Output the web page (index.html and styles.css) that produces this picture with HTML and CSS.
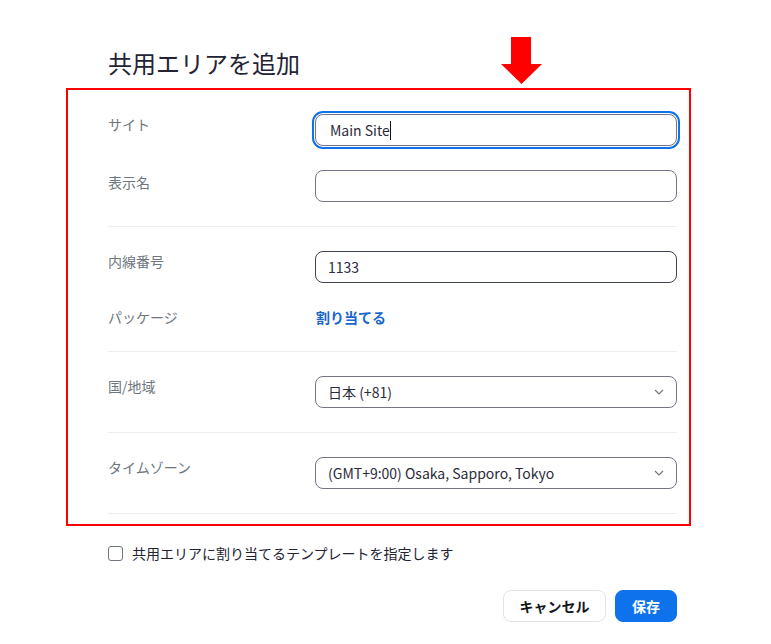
FILE: index.html
```html
<!DOCTYPE html>
<html lang="ja">
<head>
<meta charset="utf-8">
<title>共用エリアを追加</title>
<link rel="stylesheet" href="styles.css">
</head>
<body>
<div class="page">
  <h1 class="title">共用エリアを追加</h1>
  <svg class="arrow" width="42" height="48" viewBox="0 0 42 48" aria-hidden="true">
    <polygon points="10,0 30,0 30,27 41,27 20.5,47 0,27 10,27" fill="#ff0000"/>
  </svg>
  <div class="form-box">
    <div class="row">
      <div class="label">サイト</div>
      <div class="field field-focus"><span class="value">Main Site</span><span class="caret"></span></div>
    </div>
    <div class="row">
      <div class="label label-low">表示名</div>
      <div class="field"></div>
    </div>
    <div class="divider"></div>
    <div class="row">
      <div class="label">内線番号</div>
      <div class="field field-dark"><span class="value">1133</span></div>
    </div>
    <div class="row row-text">
      <div class="label">パッケージ</div>
      <a class="link" href="#">割り当てる</a>
    </div>
    <div class="divider"></div>
    <div class="row">
      <div class="label">国/地域</div>
      <div class="field select"><span class="value">日本 (+81)</span>
        <svg class="chevron" width="10" height="6" viewBox="0 0 10 6"><polyline points="1,1 5,5 9,1" fill="none" stroke="#6e7680" stroke-width="1.2"/></svg>
      </div>
    </div>
    <div class="divider"></div>
    <div class="row">
      <div class="label">タイムゾーン</div>
      <div class="field select"><span class="value">(GMT+9:00) Osaka, Sapporo, Tokyo</span>
        <svg class="chevron" width="10" height="6" viewBox="0 0 10 6"><polyline points="1,1 5,5 9,1" fill="none" stroke="#6e7680" stroke-width="1.2"/></svg>
      </div>
    </div>
    <div class="divider"></div>
  </div>
  <label class="check-row">
    <span class="checkbox"></span>
    <span class="check-text">共用エリアに割り当てるテンプレートを指定します</span>
  </label>
  <div class="actions">
    <button class="btn btn-cancel" type="button">キャンセル</button>
    <button class="btn btn-save" type="button">保存</button>
  </div>
</div>
</body>
</html>
```

FILE: styles.css
```css
* { box-sizing: border-box; }

html, body {
  margin: 0;
  padding: 0;
  background: #ffffff;
}

body {
  font-family: "Noto Sans CJK JP", "Noto Sans", sans-serif;
  color: #232333;
}

.page {
  position: relative;
  width: 625px;
  margin-left: 66px;
  padding-top: 47px;
}

.title {
  margin: 0 0 9px 42px;
  font-size: 24px;
  line-height: 32px;
  font-weight: 400;
  color: #232333;
}

.arrow {
  position: absolute;
  left: 435px;
  top: 37px;
}

.form-box {
  border: 2px solid #ff0000;
  padding: 0 12px 10px 40px;
  display: flex;
  flex-direction: column;
}

.row {
  display: flex;
  align-items: flex-start;
  margin-top: 24px;
}

.row-text {
  align-items: center;
  height: 20px;
}

.label {
  flex: 0 0 207px;
  font-size: 14px;
  line-height: 20px;
  color: #6e7680;
}

.label-low {
  margin-top: 2px;
}

.field {
  position: relative;
  flex: 1;
  height: 32px;
  border: 1px solid #747487;
  border-radius: 8px;
  display: flex;
  align-items: center;
  padding: 0 12px;
  font-size: 14px;
  color: #2b2b3a;
}

.field-focus {
  outline: 2px solid #0e72ed;
  outline-offset: 1px;
  padding-left: 14px;
}

.field-dark {
  border-color: #3d4350;
}

.caret {
  display: inline-block;
  width: 1px;
  height: 19px;
  background: #131619;
}

.select {
  justify-content: space-between;
}

.chevron {
  flex: 0 0 auto;
}

.link {
  font-size: 14px;
  line-height: 20px;
  font-weight: 700;
  color: #1766cc;
  text-decoration: none;
  margin-left: 1px;
}

.divider {
  height: 1px;
  background: #ededf4;
  margin-top: 24px;
}

.check-row {
  display: flex;
  align-items: center;
  margin: 17px 0 0 42px;
  height: 20px;
}

.checkbox {
  width: 15px;
  height: 15px;
  border: 1.5px solid #6e7680;
  border-radius: 3px;
  margin-right: 9px;
}

.check-text {
  font-size: 14px;
  line-height: 20px;
  color: #232333;
}

.actions {
  display: flex;
  justify-content: flex-end;
  gap: 9px;
  margin-top: 27px;
  padding-right: 14px;
}

.btn {
  height: 32px;
  border-radius: 8px;
  font-family: "Noto Sans CJK JP", "Noto Sans", sans-serif;
  font-size: 14px;
  font-weight: 700;
  line-height: 20px;
  cursor: pointer;
}

.btn-cancel {
  width: 103px;
  background: #ffffff;
  border: 1px solid #dfe3e8;
  color: #131619;
}

.btn-save {
  width: 62px;
  background: #0e72ed;
  border: 1px solid #0e72ed;
  color: #ffffff;
}
```
